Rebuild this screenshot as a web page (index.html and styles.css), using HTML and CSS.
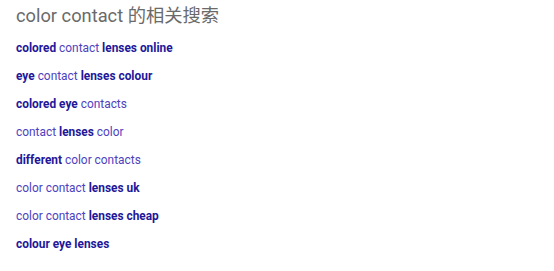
FILE: index.html
```html
<!DOCTYPE html>
<html>
<head>
<meta charset="utf-8">
<link rel="stylesheet" href="styles.css">
</head>
<body>
<div class="related">
  <h3 class="title">color contact 的相关搜索</h3>
  <ul class="list">
    <li><a href="#"><b>colored</b> contact <b>lenses online</b></a></li>
    <li><a href="#"><b>eye</b> contact <b>lenses colour</b></a></li>
    <li><a href="#"><b>colored eye</b> contacts</a></li>
    <li><a href="#">contact <b>lenses</b> color</a></li>
    <li><a href="#"><b>different</b> color contacts</a></li>
    <li><a href="#">color contact <b>lenses uk</b></a></li>
    <li><a href="#">color contact <b>lenses cheap</b></a></li>
    <li><a href="#"><b>colour eye lenses</b></a></li>
  </ul>
</div>
</body>
</html>
```
FILE: styles.css
```css
html, body {
  margin: 0;
  padding: 0;
  background: #fff;
}
body {
  font-family: Roboto, "Noto Sans CJK SC", sans-serif;
}
.related {
  padding: 4px 16px 0 16px;
}
.title {
  margin: 0;
  font-size: 18.3px;
  font-weight: 400;
  line-height: 24px;
  color: #6a6a6a;
}
.list {
  list-style: none;
  margin: 0;
  padding: 10px 0 0 0;
  display: flex;
  flex-direction: column;
}
.list li {
  height: 28px;
  line-height: 20px;
  font-size: 11.9px;
}
.list a {
  color: #4d42c0;
  text-decoration: none;
}
.list b {
  font-weight: 700;
  color: #231799;
}
```
